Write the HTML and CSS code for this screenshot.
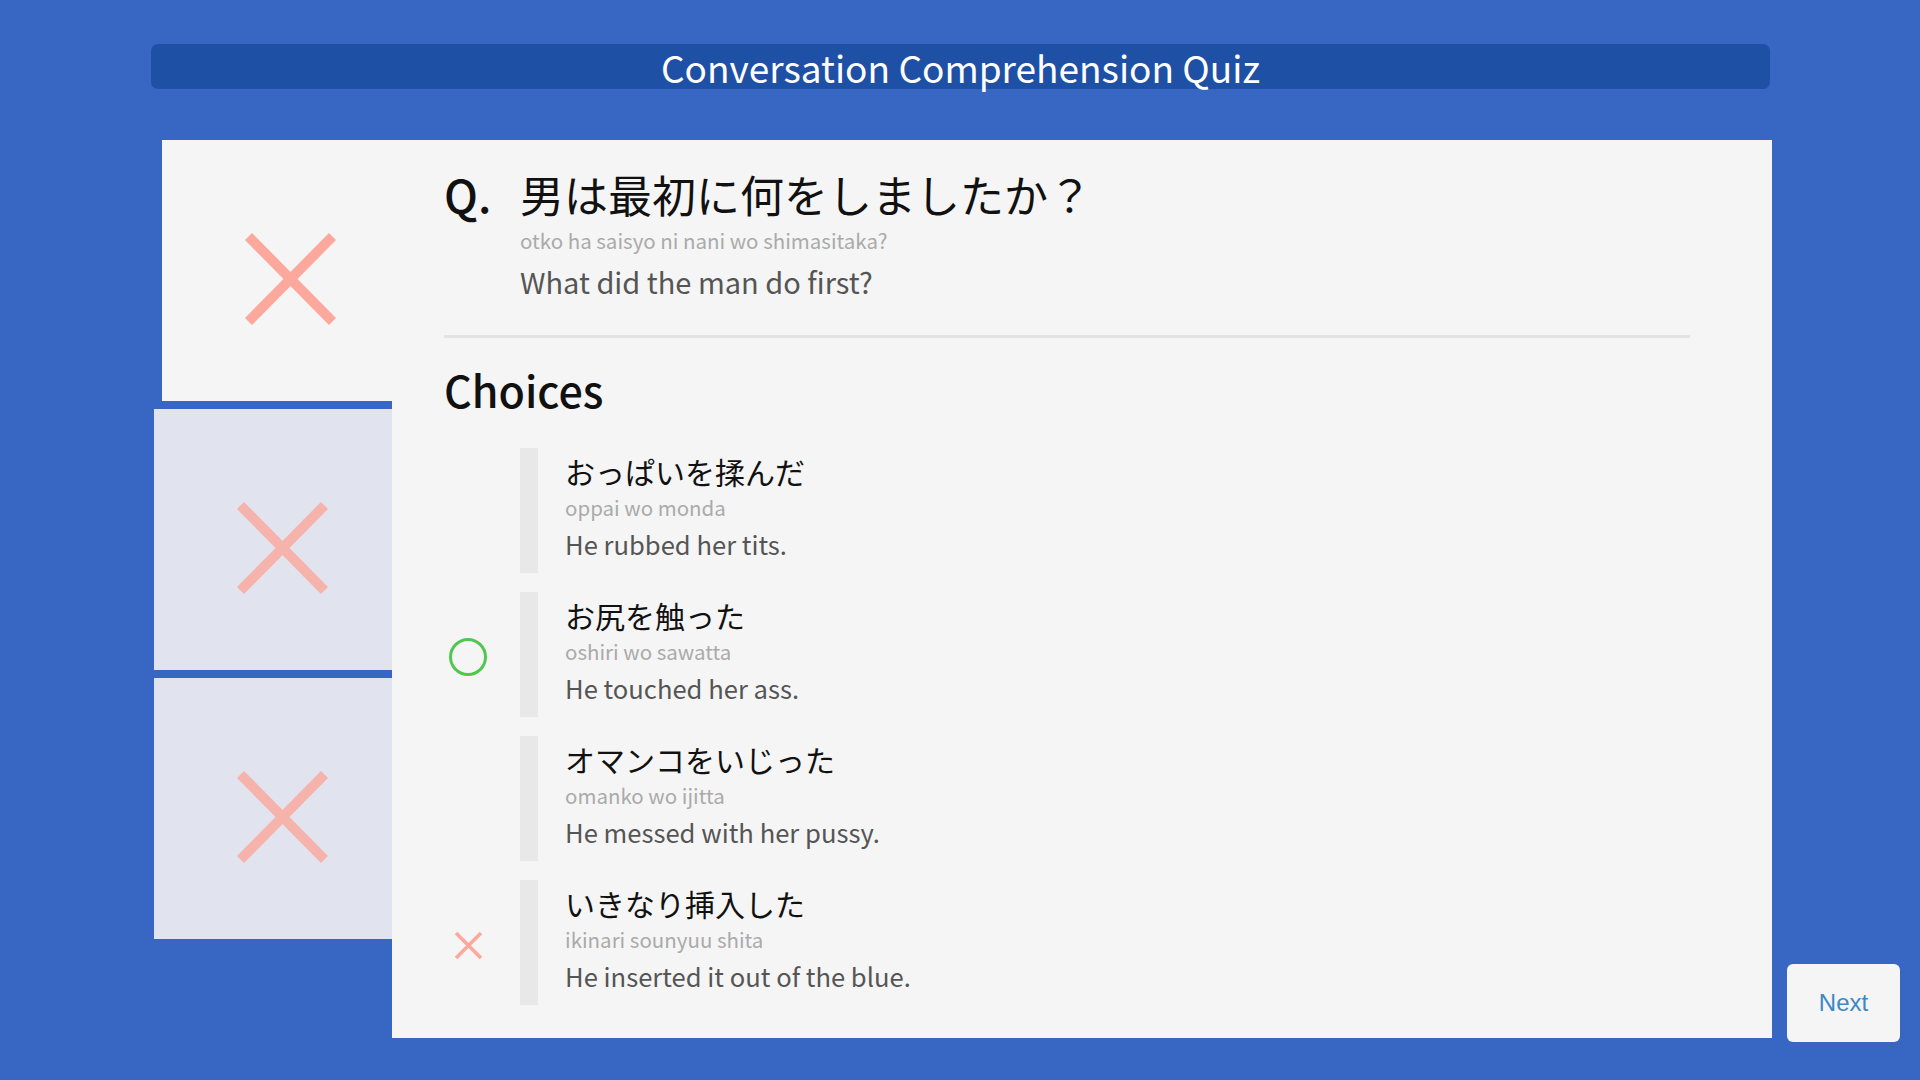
FILE: index.html
```html
<!DOCTYPE html>
<html lang="ja">
<head>
<meta charset="utf-8">
<title>Conversation Comprehension Quiz</title>
<link rel="stylesheet" href="styles.css">
</head>
<body>
<header class="title-bar">
  <h1 class="title">Conversation Comprehension Quiz</h1>
</header>
<div class="main">
  <nav class="sidebar">
    <div class="tab tab-active">
      <svg class="tab-x" viewBox="0 0 91 92" width="91" height="92"><line x1="3.5" y1="3.5" x2="87.5" y2="88.5"/><line x1="87.5" y1="3.5" x2="3.5" y2="88.5"/></svg>
    </div>
    <div class="tab">
      <svg class="tab-x" viewBox="0 0 91 92" width="91" height="92"><line x1="3.5" y1="3.5" x2="87.5" y2="88.5"/><line x1="87.5" y1="3.5" x2="3.5" y2="88.5"/></svg>
    </div>
    <div class="tab">
      <svg class="tab-x" viewBox="0 0 91 92" width="91" height="92"><line x1="3.5" y1="3.5" x2="87.5" y2="88.5"/><line x1="87.5" y1="3.5" x2="3.5" y2="88.5"/></svg>
    </div>
  </nav>
  <section class="panel">
    <div class="question">
      <div class="q-row">
        <span class="q-label">Q.</span>
        <span class="q-jp">男は最初に何をしましたか？</span>
      </div>
      <div class="q-romaji">otko ha saisyo ni nani wo shimasitaka?</div>
      <div class="q-en">What did the man do first?</div>
    </div>
    <hr class="divider">
    <h2 class="choices-title">Choices</h2>
    <ul class="choices">
      <li class="choice">
        <div class="mark"></div>
        <div class="bar"></div>
        <div class="choice-text">
          <div class="c-jp">おっぱいを揉んだ</div>
          <div class="c-romaji">oppai wo monda</div>
          <div class="c-en">He rubbed her tits.</div>
        </div>
      </li>
      <li class="choice">
        <div class="mark"><span class="circle"></span></div>
        <div class="bar"></div>
        <div class="choice-text">
          <div class="c-jp">お尻を触った</div>
          <div class="c-romaji">oshiri wo sawatta</div>
          <div class="c-en">He touched her ass.</div>
        </div>
      </li>
      <li class="choice">
        <div class="mark"></div>
        <div class="bar"></div>
        <div class="choice-text">
          <div class="c-jp">オマンコをいじった</div>
          <div class="c-romaji">omanko wo ijitta</div>
          <div class="c-en">He messed with her pussy.</div>
        </div>
      </li>
      <li class="choice">
        <div class="mark">
          <svg class="small-x" viewBox="0 0 29 29" width="29" height="29"><line x1="2" y1="2" x2="27" y2="27"/><line x1="27" y1="2" x2="2" y2="27"/></svg>
        </div>
        <div class="bar"></div>
        <div class="choice-text">
          <div class="c-jp">いきなり挿入した</div>
          <div class="c-romaji">ikinari sounyuu shita</div>
          <div class="c-en">He inserted it out of the blue.</div>
        </div>
      </li>
    </ul>
  </section>
  <button class="next-btn" type="button">Next</button>
</div>
</body>
</html>
```
FILE: styles.css
```css
html, body {
  margin: 0;
  padding: 0;
}
body {
  width: 1920px;
  height: 1080px;
  overflow: hidden;
  background: #3867c3;
  font-family: "Noto Sans CJK JP", "Noto Sans", sans-serif;
}
.title-bar {
  margin: 44px 0 0 151px;
  width: 1619px;
  height: 45px;
  background: #1e50a6;
  border-radius: 7px;
  display: flex;
  justify-content: center;
  align-items: center;
}
.title {
  margin: 0;
  font-size: 37px;
  font-weight: 400;
  line-height: 45px;
  color: #ffffff;
  position: relative;
  top: 1px;
}
.main {
  display: flex;
  margin: 51px 0 0 154px;
}
.sidebar {
  width: 238px;
  display: flex;
  flex-direction: column;
  gap: 8px;
  flex: none;
}
.tab {
  height: 261px;
  background: #e1e4ee;
  box-sizing: border-box;
  padding: 93px 0 0 83px;
}
.tab-active {
  margin-left: 8px;
  background: #f5f5f5;
}
.tab-x line {
  stroke: #fca89c;
  stroke-width: 10;
}
.tab .tab-x {
  opacity: 0.8;
  display: block;
}
.tab-active .tab-x {
  opacity: 1;
}
.panel {
  width: 1380px;
  height: 898px;
  flex: none;
  background: #f5f5f5;
  box-sizing: border-box;
  padding: 24px 82px 0 52px;
}
.q-row {
  display: flex;
  align-items: baseline;
  line-height: 60px;
}
.q-label {
  width: 76px;
  flex: none;
  font-size: 45px;
  font-weight: 500;
  color: #111;
}
.q-jp {
  font-size: 44px;
  color: #111;
}
.q-romaji {
  margin: 2px 0 0 76px;
  font-size: 20.5px;
  line-height: 28px;
  color: #aaaaaa;
}
.q-en {
  margin: 9px 0 0 76px;
  font-size: 29px;
  line-height: 36px;
  color: #555555;
}
.divider {
  margin: 36px 0 0 0;
  height: 3px;
  border: 0;
  background: #e3e3e3;
}
.choices-title {
  margin: 24px 0 0 0;
  font-size: 43px;
  font-weight: 500;
  line-height: 54px;
  color: #111;
}
.choices {
  list-style: none;
  margin: 32px 0 0 0;
  padding: 0;
  display: flex;
  flex-direction: column;
  gap: 19px;
}
.choice {
  display: flex;
  height: 125px;
}
.mark {
  width: 48px;
  margin-right: 28px;
  display: flex;
  align-items: center;
  justify-content: center;
  padding-top: 5px;
  box-sizing: border-box;
}
.circle {
  width: 38px;
  height: 38px;
  box-sizing: border-box;
  border: 3px solid #50c850;
  border-radius: 50%;
}
.small-x line {
  stroke: #fca89c;
  stroke-width: 3.5;
}
.small-x {
  display: block;
}
.bar {
  width: 18px;
  background: #e8e8e8;
  flex: none;
}
.choice-text {
  padding: 3px 0 0 27px;
}
.c-jp {
  font-size: 30px;
  line-height: 40px;
  color: #111;
}
.c-romaji {
  margin-top: 2px;
  font-size: 20.5px;
  line-height: 28px;
  color: #aaaaaa;
}
.c-en {
  margin-top: 5px;
  font-size: 25.6px;
  line-height: 36px;
  color: #555555;
}
.next-btn {
  align-self: flex-end;
  margin: 0 0 -4px 15px;
  width: 113px;
  height: 78px;
  flex: none;
  border: 0;
  border-radius: 6px;
  background: #f5f5f5;
  font-family: "Liberation Sans", Arial, sans-serif;
  font-size: 24px;
  color: #3a89c6;
  padding: 0;
}
```
